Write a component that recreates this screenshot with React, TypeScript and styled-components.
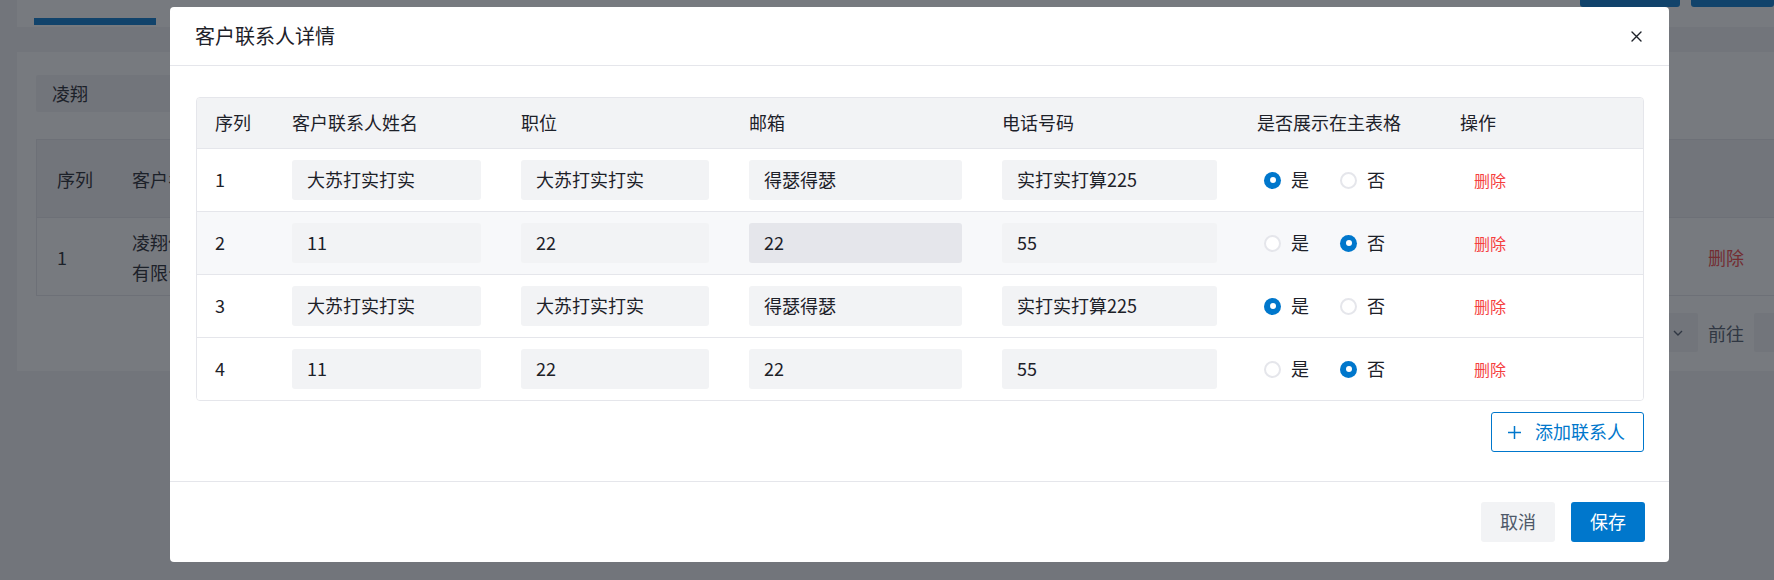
import React from 'react';
import styled, { createGlobalStyle } from 'styled-components';

const PRIMARY = '#0077cc';
const BORDER = '#e5e6eb';
const FILL = '#f2f3f5';

const GlobalStyle = createGlobalStyle`
  html, body {
    margin: 0;
    padding: 0;
  }
  body {
    font-family: "Noto Sans CJK SC", "Noto Sans", sans-serif;
    color: #1d2129;
  }
  * {
    box-sizing: border-box;
  }
`;

const Page = styled.div`
  position: relative;
  width: 1774px;
  height: 580px;
  overflow: hidden;
  background: ${FILL};
`;

/* ---------- page behind the dialog ---------- */

const TopBar = styled.div`
  display: flex;
  justify-content: space-between;
  height: 27px;
  margin-left: 17px;
  background: #fff;
`;

const ActiveTab = styled.div`
  width: 122px;
  height: 7px;
  margin: 18px 0 0 17px;
  background: ${PRIMARY};
`;

const TopActions = styled.div`
  display: flex;
  align-items: flex-start;
  gap: 11px;
`;

const TopButton = styled.div<{ $w: number }>`
  width: ${({ $w }) => $w}px;
  height: 7px;
  background: ${PRIMARY};
  border-radius: 0 0 3px 3px;
`;

const Card = styled.div`
  height: 319px;
  margin: 25px 0 0 17px;
  padding: 23px 0 0 19px;
  background: #fff;
  font-size: 18px;
`;

const FilterBox = styled.div`
  width: 420px;
  height: 37px;
  padding-left: 16px;
  line-height: 37px;
  background: ${FILL};
  border-radius: 2px;
`;

const BgTable = styled.div`
  width: 1760px;
  margin-top: 27px;
  border: 1px solid ${BORDER};
`;

const BgRow = styled.div<{ $head?: boolean }>`
  display: grid;
  grid-template-columns: 75px 1fr 107px;
  align-items: center;
  height: 77px;
  background: ${({ $head }) => ($head ? FILL : '#fff')};
  & + & {
    border-top: 1px solid ${BORDER};
    height: 78px;
  }
`;

const BgCell = styled.div<{ $danger?: boolean }>`
  padding-left: 20px;
  line-height: 30px;
  color: ${({ $danger }) => ($danger ? '#f53f3f' : '#1d2129')};
`;

const Pager = styled.div`
  display: flex;
  justify-content: flex-end;
  align-items: center;
  gap: 10px;
  width: 1760px;
  margin-top: 17px;
  height: 39px;
`;

const PagerSelect = styled.div`
  display: flex;
  justify-content: flex-end;
  align-items: center;
  width: 120px;
  height: 39px;
  padding-right: 14px;
  background: ${FILL};
  border-radius: 2px;
`;

const PagerText = styled.span`
  color: #4e5969;
`;

const PagerInput = styled.div`
  width: 42px;
  height: 39px;
  background: ${FILL};
  border-radius: 2px;
`;

const Mask = styled.div`
  position: absolute;
  inset: 0;
  background: rgba(29, 33, 41, 0.6);
`;

/* ---------- dialog ---------- */

const Dialog = styled.div`
  position: absolute;
  left: 170px;
  top: 7px;
  width: 1499px;
  background: #fff;
  border-radius: 4px;
  font-size: 18px;
`;

const DialogHeader = styled.div`
  display: flex;
  justify-content: space-between;
  align-items: center;
  height: 59px;
  padding: 0 27px 0 25px;
  border-bottom: 1px solid ${BORDER};
`;

const DialogTitle = styled.h2`
  margin: 0 0 1px;
  font-size: 20px;
  font-weight: 400;
  color: #1d2129;
`;

const CloseButton = styled.button`
  display: flex;
  padding: 0;
  border: none;
  background: none;
  cursor: pointer;
`;

const DialogBody = styled.div`
  padding: 31px 25px 29px 26px;
`;

const Table = styled.div`
  border: 1px solid ${BORDER};
  border-radius: 4px;
  overflow: hidden;
`;

const Row = styled.div<{ $head?: boolean; $active?: boolean }>`
  display: grid;
  grid-template-columns: 75px 229px 228px 253px 255px 203px 1fr;
  align-items: center;
  height: ${({ $head }) => ($head ? 50 : 62)}px;
  background: ${({ $head, $active }) => ($head ? FILL : $active ? '#f7f8fa' : '#fff')};
  & + & {
    border-top: 1px solid ${BORDER};
    height: 63px;
  }
`;

const Cell = styled.div`
  padding: 0 20px 2px;
  line-height: 26px;
  &:first-child {
    padding-left: 18px;
  }
`;

const TextInput = styled.input<{ $hover?: boolean }>`
  display: block;
  width: 100%;
  height: 40px;
  margin-top: 2px;
  padding: 0 15px 3px;
  border: none;
  border-radius: 3px;
  outline: none;
  background: ${({ $hover }) => ($hover ? BORDER : FILL)};
  font-family: inherit;
  font-size: 18px;
  color: #1d2129;
`;

const RadioGroup = styled.div`
  display: flex;
  align-items: center;
  padding-left: 7px;
`;

const RadioItem = styled.label`
  display: flex;
  align-items: center;
  gap: 10px;
  & + & {
    margin-left: 31px;
  }
`;

const RadioMark = styled.span<{ $checked?: boolean }>`
  position: relative;
  width: 17px;
  height: 17px;
  margin-top: 2px;
  border-radius: 50%;
  border: ${({ $checked }) => ($checked ? 'none' : `2px solid ${BORDER}`)};
  background: ${({ $checked }) => ($checked ? PRIMARY : '#fff')};
  &::after {
    content: '';
    display: ${({ $checked }) => ($checked ? 'block' : 'none')};
    position: absolute;
    left: 50%;
    top: 50%;
    width: 6px;
    height: 6px;
    margin: -3px 0 0 -3px;
    border-radius: 50%;
    background: #fff;
  }
`;

const DeleteButton = styled.button`
  padding: 0 14px;
  border: none;
  background: none;
  font-family: inherit;
  font-size: 16px;
  color: #f53f3f;
  cursor: pointer;
`;

const AddRow = styled.div`
  display: flex;
  justify-content: flex-end;
  margin-top: 11px;
`;

const AddButton = styled.button`
  display: inline-flex;
  align-items: center;
  gap: 13px;
  height: 40px;
  padding: 0 18px 2px 15px;
  border: 1px solid ${PRIMARY};
  border-radius: 3px;
  background: #fff;
  font-family: inherit;
  font-size: 18px;
  color: ${PRIMARY};
  cursor: pointer;
  svg {
    margin-top: 2px;
  }
`;

const DialogFooter = styled.div`
  display: flex;
  justify-content: flex-end;
  gap: 16px;
  padding: 20px 24px;
  border-top: 1px solid ${BORDER};
`;

const FooterButton = styled.button<{ $primary?: boolean }>`
  width: 74px;
  height: 40px;
  padding: 0 0 2px;
  border: none;
  border-radius: 3px;
  background: ${({ $primary }) => ($primary ? PRIMARY : FILL)};
  font-family: inherit;
  font-size: 18px;
  color: ${({ $primary }) => ($primary ? '#fff' : '#4e5969')};
  cursor: pointer;
`;

interface Contact {
  name: string;
  position: string;
  email: string;
  phone: string;
  show: boolean;
}

const contacts: Contact[] = [
  { name: '大苏打实打实', position: '大苏打实打实', email: '得瑟得瑟', phone: '实打实打算225', show: true },
  { name: '11', position: '22', email: '22', phone: '55', show: false },
  { name: '大苏打实打实', position: '大苏打实打实', email: '得瑟得瑟', phone: '实打实打算225', show: true },
  { name: '11', position: '22', email: '22', phone: '55', show: false },
];

const headers = ['序列', '客户联系人姓名', '职位', '邮箱', '电话号码', '是否展示在主表格', '操作'];

const CloseIcon = () => (
  <svg width="11" height="11" viewBox="0 0 11 11">
    <path d="M1 1L10 10M10 1L1 10" stroke="#1d2129" strokeWidth="1.4" strokeLinecap="round" />
  </svg>
);

const PlusIcon = () => (
  <svg width="15" height="15" viewBox="0 0 15 15">
    <path d="M7.5 1V14M1 7.5H14" stroke={PRIMARY} strokeWidth="1.5" />
  </svg>
);

const Chevron = () => (
  <svg width="12" height="12" viewBox="0 0 12 12">
    <path d="M2 4L6 8L10 4" stroke="#4e5969" strokeWidth="1.4" fill="none" />
  </svg>
);

const Background = () => (
  <>
    <TopBar>
      <ActiveTab />
      <TopActions>
        <TopButton $w={100} />
        <TopButton $w={83} />
      </TopActions>
    </TopBar>
    <Card>
      <FilterBox>凌翔</FilterBox>
      <BgTable>
        <BgRow $head>
          <BgCell>序列</BgCell>
          <BgCell>客户名称</BgCell>
          <BgCell />
        </BgRow>
        <BgRow>
          <BgCell>1</BgCell>
          <BgCell>
            凌翔信
            <br />
            有限公司
          </BgCell>
          <BgCell $danger>删除</BgCell>
        </BgRow>
      </BgTable>
      <Pager>
        <PagerSelect>
          <Chevron />
        </PagerSelect>
        <PagerText>前往</PagerText>
        <PagerInput />
      </Pager>
    </Card>
  </>
);

const App: React.FC = () => {
  return (
    <>
      <GlobalStyle />
      <Page>
        <Background />
        <Mask />
        <Dialog>
          <DialogHeader>
            <DialogTitle>客户联系人详情</DialogTitle>
            <CloseButton>
              <CloseIcon />
            </CloseButton>
          </DialogHeader>
          <DialogBody>
            <Table>
              <Row $head>
                {headers.map((h) => (
                  <Cell key={h}>{h}</Cell>
                ))}
              </Row>
              {contacts.map((c, i) => (
                <Row key={i} $active={i === 1}>
                  <Cell>{i + 1}</Cell>
                  <Cell>
                    <TextInput readOnly value={c.name} />
                  </Cell>
                  <Cell>
                    <TextInput readOnly value={c.position} />
                  </Cell>
                  <Cell>
                    <TextInput readOnly value={c.email} $hover={i === 1} />
                  </Cell>
                  <Cell>
                    <TextInput readOnly value={c.phone} />
                  </Cell>
                  <Cell>
                    <RadioGroup>
                      <RadioItem>
                        <RadioMark $checked={c.show} />是
                      </RadioItem>
                      <RadioItem>
                        <RadioMark $checked={!c.show} />否
                      </RadioItem>
                    </RadioGroup>
                  </Cell>
                  <Cell>
                    <DeleteButton>删除</DeleteButton>
                  </Cell>
                </Row>
              ))}
            </Table>
            <AddRow>
              <AddButton>
                <PlusIcon />
                添加联系人
              </AddButton>
            </AddRow>
          </DialogBody>
          <DialogFooter>
            <FooterButton>取消</FooterButton>
            <FooterButton $primary>保存</FooterButton>
          </DialogFooter>
        </Dialog>
      </Page>
    </>
  );
};

export default App;
